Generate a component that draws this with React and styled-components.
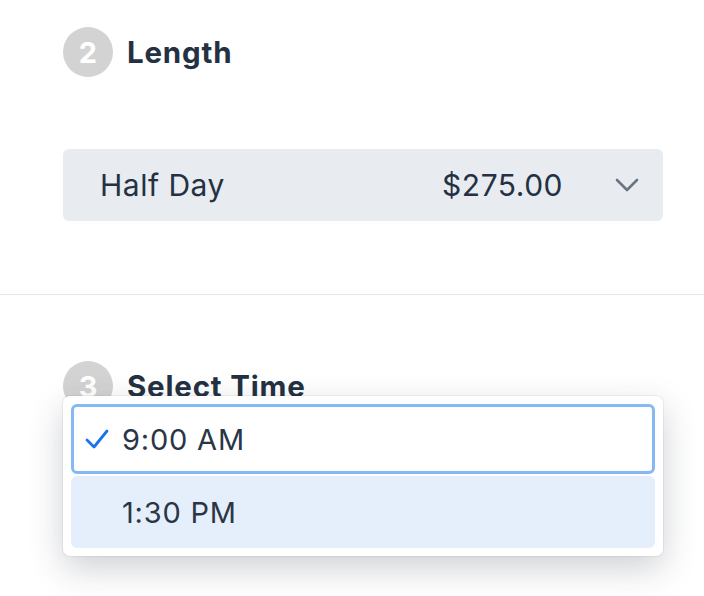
import React from "react";
import styled, { createGlobalStyle } from "styled-components";

const Global = createGlobalStyle`
  html, body { margin: 0; padding: 0; background: #fff; }
  body { font-family: Inter, "Noto Sans", sans-serif; color: #243142; }
`;

const Page = styled.div`
  width: 704px;
  height: 596px;
  overflow: hidden;
  position: relative;
`;

const Section = styled.section`
  padding: ${({ $pad }) => $pad};
  border-bottom: ${({ $divider }) => ($divider ? "1px solid #e3e5e8" : "none")};
`;

const Heading = styled.h2`
  display: flex;
  align-items: center;
  gap: 14px;
  margin: 0;
  height: 50px;
  font-size: 29.5px;
  font-weight: 700;
  color: #243142;
  letter-spacing: 0.8px;
`;

const Step = styled.span`
  width: 50px;
  height: 50px;
  flex: none;
  border-radius: 50%;
  background: #d3d3d3;
  color: #fff;
  display: flex;
  align-items: center;
  justify-content: center;
  font-size: 29px;
  font-weight: 700;
  letter-spacing: 0;
`;

const SelectBox = styled.div`
  margin-top: 72px;
  height: 72px;
  width: 600px;
  box-sizing: border-box;
  border-radius: 6px;
  background: #e8ebf0;
  display: flex;
  align-items: center;
  padding: 0 24px 0 37px;
  font-size: 30px;
  letter-spacing: 0.5px;
`;

const Label = styled.span`
  flex: 1;
`;

const Price = styled.span`
  margin-right: 52px;
`;

const Menu = styled.div`
  position: absolute;
  left: 63px;
  top: 396px;
  width: 600px;
  box-sizing: border-box;
  padding: 8px;
  background: #fff;
  border-radius: 7px;
  box-shadow: 0 0 0 1px rgba(30, 40, 60, 0.06), 0 12px 34px rgba(30, 40, 60, 0.22);
  display: flex;
  flex-direction: column;
  gap: 2px;
`;

const Option = styled.div`
  box-sizing: border-box;
  border-radius: 6px;
  display: flex;
  align-items: center;
  gap: 13px;
  padding-left: ${({ $selected }) => ($selected ? "11px" : "51px")};
  font-size: 29px;
  letter-spacing: 0.8px;
  color: #2a3646;
  background: ${({ $selected }) => ($selected ? "#fff" : "#e5effc")};
  border: ${({ $selected }) => ($selected ? "3px solid #84b9f5" : "none")};
  height: ${({ $selected }) => ($selected ? "70px" : "72px")};
`;

const Chevron = () => (
  <svg width="24" height="14" viewBox="0 0 24 14" fill="none">
    <path d="M2 2l10 10L22 2" stroke="#6b7482" strokeWidth="2.6" strokeLinecap="round" strokeLinejoin="round" />
  </svg>
);

const Check = () => (
  <svg width="24" height="20" viewBox="0 0 24 20" fill="none">
    <path d="M2 11l7 7L22 2" stroke="#1a73e8" strokeWidth="2.8" strokeLinecap="round" strokeLinejoin="round" />
  </svg>
);

export default function App() {
  return (
    <Page>
      <Global />
      <Section $pad="27px 63px 73px" $divider>
        <Heading>
          <Step>2</Step>
          Length
        </Heading>
        <SelectBox>
          <Label>Half Day</Label>
          <Price>$275.00</Price>
          <Chevron />
        </SelectBox>
      </Section>
      <Section $pad="66px 63px 0">
        <Heading>
          <Step>3</Step>
          Select Time
        </Heading>
      </Section>
      <Menu>
        <Option $selected>
          <Check />
          9:00 AM
        </Option>
        <Option>1:30 PM</Option>
      </Menu>
    </Page>
  );
}
